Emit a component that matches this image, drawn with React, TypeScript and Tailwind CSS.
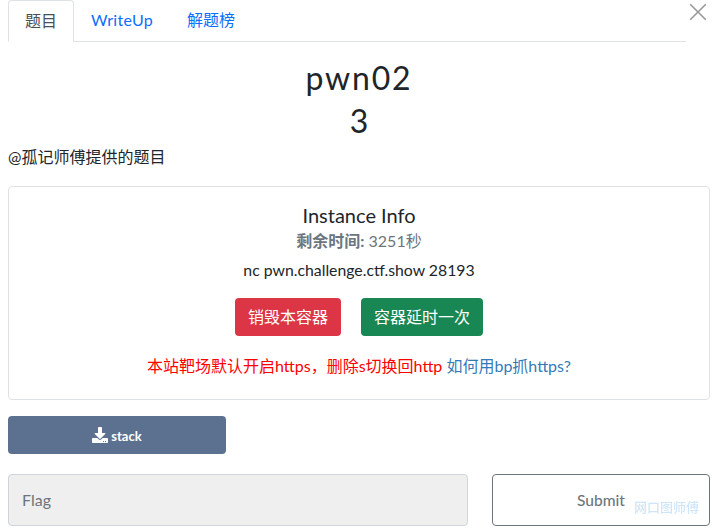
import { FaDownload } from "react-icons/fa";

const font = "font-['Lato','Noto_Sans_CJK_SC',sans-serif]";

export default function App() {
  return (
    <div className="h-[532px] w-[716px] overflow-hidden">
      <div className={`${font} relative h-[532px] w-[718px] bg-white text-[16px] leading-6 text-[#212529]`}>
        <button className="absolute right-[11px] top-[3px] h-[18px] w-[18px] text-[#999]">
          <svg viewBox="0 0 18 18" className="h-[18px] w-[18px]" fill="none" stroke="currentColor" strokeWidth="1.6">
            <path d="M1.2 1.2 16.8 16.8M16.8 1.2 1.2 16.8" />
          </svg>
        </button>

        <div className="ml-2 flex h-[42px] w-[678px] border-b border-[#dee2e6]">
          <div className="h-[42px] rounded-t-[4px] border border-[#dee2e6] border-b-white bg-white px-4 py-2 text-[#495057]">题目</div>
          <div className="px-[17px] py-2 tracking-[0.3px] text-[#0d6efd]">WriteUp</div>
          <div className="px-[17px] py-2 text-[#0d6efd]">解题榜</div>
        </div>

        <h1 className="mt-[17px] text-center text-[32px] leading-[38px] tracking-[1.8px]">pwn02</h1>
        <h2 className="mt-[5px] text-center text-[32px] leading-[38px]">3</h2>
        <p className="ml-2 mt-[5px] leading-6">@孤记师傅提供的题目</p>

        <div className="mx-2 mt-[17px] flex h-[214px] flex-col items-center rounded-[4px] border border-[#dee2e6] pt-[16px]">
          <h4 className="text-[20px] leading-6">Instance Info</h4>
          <div className="mt-[2px] leading-[24px] text-[#6c757d]"><b>剩余时间:</b> 3251秒</div>
          <div className="mt-[5px] text-[15.8px] leading-6">nc pwn.challenge.ctf.show 28193</div>
          <div className="mt-4 flex gap-5">
            <button className="h-[38px] w-[106px] rounded-[4px] bg-[#dc3545] text-[16px] text-white">销毁本容器</button>
            <button className="h-[38px] w-[122px] rounded-[4px] bg-[#198754] text-[16px] text-white">容器延时一次</button>
          </div>
          <div className="mt-[18px] leading-6 text-[#ff0000]">
            本站靶场默认开启https，删除s切换回http <span className="text-[#337ab7]">如何用bp抓https?</span>
          </div>
        </div>

        <button className="ml-2 mt-4 flex h-[38px] w-[218px] items-center justify-center gap-[3px] rounded-[4px] bg-[#5c718f] text-[13px] font-bold text-white">
          <FaDownload size={16} />
          <span className="pt-[1px]">stack</span>
        </button>

        <div className="mx-2 mt-5 flex gap-6">
          <div className="flex h-[52px] w-[460px] items-center rounded-[4px] border border-[#ced4da] bg-[#efefef] px-[13px] text-[#6c757d]">Flag</div>
          <button className="relative h-[52px] w-[218px] rounded-[4px] border border-[#6c757d] bg-white text-[15.5px] font-medium text-[#6c757d]">
            Submit
            <span className="absolute left-[141px] top-[24px] text-[13px] leading-4 text-[#cfe6fa] blur-[0.4px]">网口图师傅</span>
          </button>
        </div>
      </div>
    </div>
  );
}
